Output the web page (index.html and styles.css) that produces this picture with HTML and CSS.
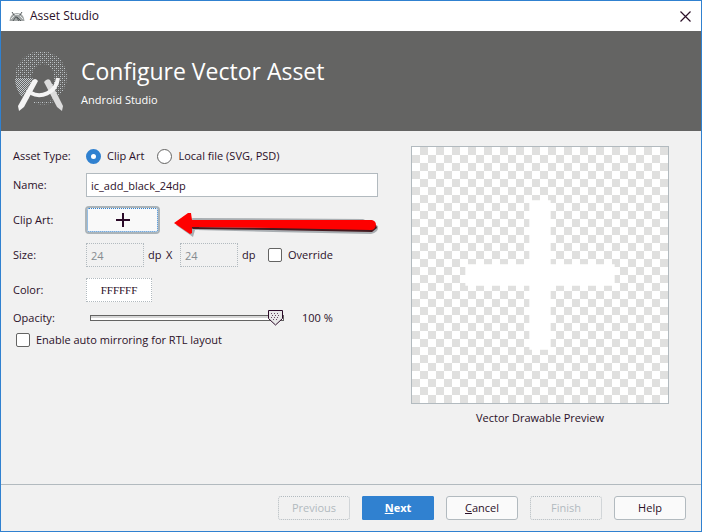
FILE: index.html
```html
<!DOCTYPE html>
<html lang="en">
<head>
<meta charset="utf-8">
<title>Asset Studio</title>
<link rel="stylesheet" href="styles.css">
</head>
<body>
<main class="window">
  <div class="titlebar">
    <svg class="app-icon" width="16" height="11" viewBox="0 0 16 11" aria-hidden="true">
      <path d="M0.5 10 Q1 4 5 2.5 Q8 1.3 11 2.5 Q15 4 15.5 10 Z" fill="#a2a6a6"/>
      <path d="M3 1 L5 4 M13 1 L11 4 M4 10 L7 5.5 L10 10 M8 6 L12 10" stroke="#555b5d" fill="none"/>
      <path d="M2 8 L5 5 M11 5 L14 8 M6 3.5 H10" stroke="#e4e6e6" fill="none"/>
    </svg>
    <span class="titlebar-text">Asset Studio</span>
    <button class="close" type="button" aria-label="Close">
      <svg width="11" height="11" viewBox="0 0 11 11"><path d="M0.5 0.5 L10.5 10.5 M10.5 0.5 L0.5 10.5" stroke="#2b1028" stroke-width="1.2"/></svg>
    </button>
  </div>

  <header class="banner">
    <svg class="logo" width="54" height="62" viewBox="0 0 54 62" aria-hidden="true">
      <defs>
        <pattern id="dots" width="4" height="4" patternUnits="userSpaceOnUse">
          <rect width="1" height="1" fill="#c4cace"/><rect x="2" y="2" width="1" height="1" fill="#c4cace"/>
          <rect x="2" width="1" height="1" fill="#8d9193"/><rect y="2" width="1" height="1" fill="#8d9193"/>
        </pattern>
        <pattern id="dense" width="2" height="2" patternUnits="userSpaceOnUse">
          <rect width="1" height="1" fill="#c4cace"/><rect x="1" y="1" width="1" height="1" fill="#c4cace"/>
        </pattern>
      </defs>
      <path d="M27 1 A26 26 0 1 1 26.9 1 Z M29 14 A11 13 0 1 0 29.1 14 Z" fill="url(#dots)" fill-rule="evenodd"/>
      <path d="M1 28 H19 L8 47 Q1 39 1 28 Z" fill="url(#dense)"/>
      <path d="M22 32 L33 29 L41 46 L32 54 H20 L14 50 Z" fill="#646463"/>
      <path d="M20 51 H38 L40 53 Q27 56 20 53 Z" fill="url(#dots)"/>
      <path d="M30 32 Q33 28 36 30 L49 56 L48 61 L43 57 Z" fill="#dcdcdc"/>
      <path d="M18 31 Q21 27 24 31 L10 57 L5 61 L4 56 Z" fill="#f4f4f4"/>
      <path d="M17 43 C26 48 42 44 44 28" stroke="#f4f4f4" stroke-width="4" fill="none"/>
    </svg>
    <div>
      <h1 class="banner-title">Configure Vector Asset</h1>
      <p class="banner-sub">Android Studio</p>
    </div>
  </header>

  <div class="content">
    <form class="form" id="asset">
      <div class="row row-type">
        <span class="label">Asset Type:</span>
        <label class="choice"><input class="radio" type="radio" name="type" checked>Clip Art</label>
        <label class="choice"><input class="radio" type="radio" name="type">Local file (SVG, PSD)</label>
      </div>
      <div class="row">
        <label class="label" for="name">Name:</label>
        <input class="field field-name" id="name" type="text" value="ic_add_black_24dp">
      </div>
      <div class="row row-clip">
        <label class="label" for="clip">Clip Art:</label>
        <button class="clip" id="clip" type="button" aria-label="Choose clip art">
          <svg width="14" height="14" viewBox="0 0 14 14"><path d="M7 0 V14 M0 7 H14" stroke="#2b0a28" stroke-width="2"/></svg>
        </button>
        <svg class="arrow" width="206" height="28" viewBox="0 0 206 28" aria-hidden="true">
          <path d="M3 15 L20 27 L22 20 L100 22 L198 24 Q206 22 205 16 L190 9 L20 8 Z" fill="#a9aeb2"/>
          <path d="M17 17 L100 18 L203 15 L204 18 L199 22 L100 20 L20 19 Z" fill="#45191f"/>
          <path d="M1 13 L15 3 H18 L19 10 H199 Q203 11 203 15 Q202 20 198 20 L100 18 L19 17 V23 L17 24 Z" fill="#fe0000"/>
        </svg>
      </div>
      <div class="row row-size">
        <label class="label" for="width">Size:</label>
        <input class="field field-size" id="width" type="text" value="24" disabled>
        <span class="unit">dp</span>
        <span class="times">X</span>
        <input class="field field-size" type="text" value="24" aria-label="Height" disabled>
        <span class="unit">dp</span>
        <label class="choice override"><input class="check" type="checkbox">Override</label>
      </div>
      <div class="row row-color">
        <label class="label" for="color">Color:</label>
        <input class="field field-color" id="color" type="text" value="FFFFFF">
      </div>
      <div class="row row-opacity">
        <label class="label" for="opacity">Opacity:</label>
        <input class="slider" id="opacity" type="range" min="0" max="100" value="100">
        <output class="percent" for="opacity">100 %</output>
      </div>
      <label class="choice mirror"><input class="check" type="checkbox">Enable auto mirroring for RTL layout</label>
    </form>

    <figure class="preview">
      <div class="canvas">
        <svg class="plus" viewBox="0 0 24 24" aria-hidden="true"><path d="M19 13h-6v6h-2v-6H5v-2h6V5h2v6h6v2z" fill="#fff"/></svg>
      </div>
      <figcaption class="caption">Vector Drawable Preview</figcaption>
    </figure>
  </div>

  <footer class="actions">
    <button class="btn" type="button" disabled>Previous</button>
    <button class="btn btn-primary" type="submit" form="asset"><u>N</u>ext</button>
    <button class="btn" type="button"><u>C</u>ancel</button>
    <button class="btn" type="button" disabled>Finish</button>
    <button class="btn" type="button">Help</button>
  </footer>
</main>
</body>
</html>
```
FILE: styles.css
```css
* {
  box-sizing: border-box;
}

body {
  margin: 0;
  font-family: "Open Sans", "Noto Sans", sans-serif;
  font-size: 11px;
  line-height: 16px;
  color: #2b1028;
}

button,
input {
  font: inherit;
  color: inherit;
}

.window {
  display: flex;
  flex-direction: column;
  min-height: 100vh;
  border: 1px solid #3081d0;
  background: #f1f1f1;
}

.titlebar {
  display: flex;
  align-items: center;
  gap: 5px;
  height: 30px;
  padding: 0 10px 0 8px;
  background: #fff;
}

.titlebar-text {
  flex: 1;
  font-size: 12px;
}

.close {
  display: flex;
  padding: 0;
  border: 0;
  background: none;
}

.banner {
  display: flex;
  align-items: flex-start;
  gap: 13px;
  height: 100px;
  padding: 19px 13px 0;
  background: #646463;
  color: #fff;
}

.banner-title {
  margin: 5px 0 0;
  font-size: 23px;
  font-weight: 400;
  line-height: 32px;
}

.banner-sub {
  margin: 5px 0 0;
}

.content {
  display: flex;
  flex: 1;
  gap: 33px;
  padding: 13px 32px 12px 12px;
}

.form {
  flex: 1;
}

.row {
  display: flex;
  align-items: center;
  height: 24px;
  margin-bottom: 9px;
}

.row-type {
  margin-bottom: 5px;
}

.row-clip {
  position: relative;
  height: 28px;
}

.row-size {
  margin-bottom: 11px;
}

.row-color {
  margin-bottom: 7px;
}

.row-opacity {
  height: 18px;
  margin-bottom: 5px;
}

.label {
  flex: 0 0 73px;
}

.choice {
  display: flex;
  align-items: center;
  gap: 6px;
}

.row-type .choice {
  margin-right: 13px;
}

.radio,
.check {
  flex: none;
  width: 14px;
  height: 14px;
  margin: 0;
  appearance: none;
  border: 1px solid #646463;
  border-radius: 2px;
  background: #fff;
}

.radio {
  width: 15px;
  height: 15px;
  border-radius: 50%;
}

.radio:checked {
  border: 5px solid #3081d0;
}

.field {
  min-width: 0;
  height: 24px;
  padding: 0 4px;
  border: 1px solid #b2babf;
  background: #fff;
}

.field-name {
  flex: 1;
}

.field-size {
  width: 58px;
  border-style: dotted;
  background: none;
  color: #858c90;
}

.field-color {
  width: 66px;
  border-style: dotted;
  font-family: "Liberation Serif", serif;
  text-align: center;
}

.unit {
  width: 18px;
  margin-left: 4px;
}

.times {
  width: 14px;
}

.override {
  margin-left: 8px;
}

.clip {
  display: flex;
  align-items: center;
  justify-content: center;
  width: 75px;
  height: 28px;
  margin-left: -1px;
  padding: 0;
  border: 2px solid #abb4b9;
  border-radius: 4px;
  outline: 1px dotted #3081d0;
  outline-offset: -3px;
  background: #f9f9f9;
}

.arrow {
  position: absolute;
  right: -1px;
  top: 4px;
}

.slider {
  width: 194px;
  height: 18px;
  margin: 0 0 0 4px;
  appearance: none;
  background: none;
}

.slider::-webkit-slider-runnable-track {
  height: 6px;
  border: 1px solid #646463;
  background: linear-gradient(#d6d6d6 50%, #fff 50%);
}

.slider::-webkit-slider-thumb {
  width: 15px;
  height: 16px;
  margin-top: -6px;
  appearance: none;
  background: url("data:image/svg+xml,%3Csvg xmlns='http://www.w3.org/2000/svg' width='15' height='16'%3E%3Cpath d='M.5.5H14.5V8.5L7.5 15L.5 8.5Z' fill='%23e8e8e8' stroke='%232b0a28'/%3E%3Cpath d='M3 3.5H12M3 7.5H12' stroke='%23644b62' stroke-dasharray='1 2'/%3E%3Cpath d='M4 5.5H12M5 9.5H11' stroke='%23644b62' stroke-dasharray='1 2'/%3E%3C/svg%3E") no-repeat;
}

.percent {
  margin-left: 18px;
}

.mirror {
  padding-left: 3px;
}

.preview {
  flex: 0 0 258px;
  margin: 2px 0 0;
}

.canvas {
  height: 258px;
  border: 1px solid #b2babf;
  background: repeating-conic-gradient(#e0e0df 0 25%, #fff 0 50%) 0 0 / 16px 16px;
}

.plus {
  display: block;
  width: 100%;
  height: 100%;
}

.caption {
  margin-top: 6px;
  text-align: center;
}

.actions {
  display: flex;
  justify-content: flex-end;
  gap: 12px;
  padding: 11px 15px;
  border-top: 1px solid #b2babf;
}

.btn {
  width: 72px;
  height: 24px;
  padding: 0;
  border: 1px solid #b2babf;
  border-radius: 3px;
  background: #fafafa;
}

.btn:disabled {
  border-style: dotted;
  background: none;
  color: #b2babf;
}

.btn-primary {
  border-color: #3081d0;
  border-radius: 1px;
  background: #3081d0;
  color: #fff;
  font-weight: 700;
}
```
